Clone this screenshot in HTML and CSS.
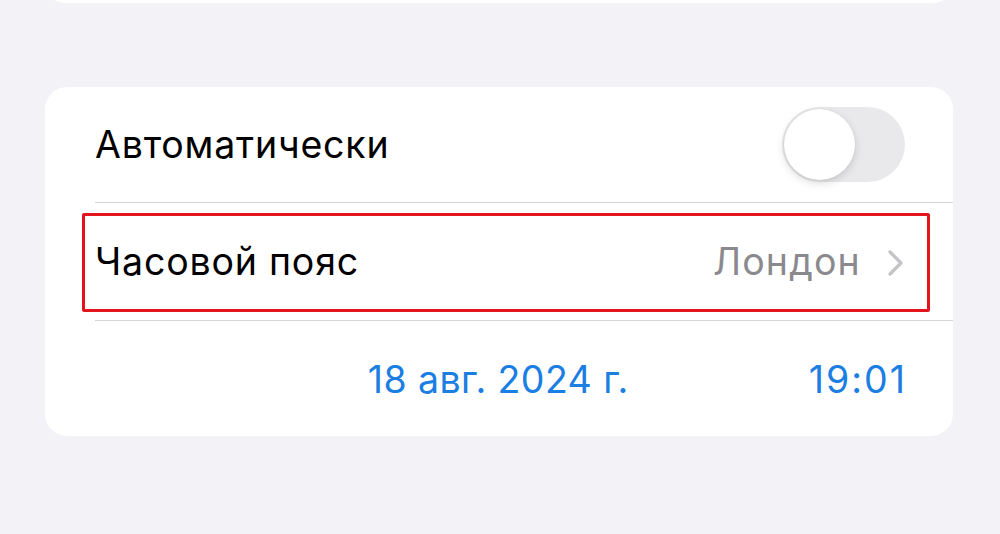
FILE: index.html
```html
<!DOCTYPE html>
<html lang="ru">
<head>
  <meta charset="UTF-8">
  <meta name="viewport" content="width=device-width, initial-scale=1.0">
  <title>Дата и время</title>
  <link rel="stylesheet" href="styles.css">
</head>
<body>
  <div class="group group-prev"></div>

  <div class="group">
    <div class="row">
      <span class="label">Автоматически</span>
      <span class="switch"><span class="knob"></span></span>
    </div>

    <div class="row row-link">
      <span class="label">Часовой пояс</span>
      <span class="value">Лондон</span>
      <svg class="chevron" width="18" height="28" viewBox="0 0 18 28">
        <path d="M3 3 L14 14 L3 25" fill="none" stroke="#c4c4c7" stroke-width="3.2" stroke-linecap="round" stroke-linejoin="round"/>
      </svg>
      <span class="highlight"></span>
    </div>

    <div class="row row-date">
      <span class="picker">18 авг. 2024 г.</span>
      <span class="picker picker-time">19:01</span>
    </div>
  </div>
</body>
</html>
```

FILE: styles.css
```css
body {
  margin: 0;
  background-color: #f2f2f7;
  font-family: Inter, Roboto, sans-serif;
  height: 534px;
  overflow: hidden;
}

.group {
  margin: 0 47px 0 45px;
  background-color: #fff;
  border-radius: 22px;
  padding-left: 50px;
}

/* bottom edge of the previous section */
.group-prev {
  height: 40px;
  margin-top: -37px;
  margin-bottom: 84px;
}

.row {
  position: relative;
  display: flex;
  align-items: center;
  height: 115px;
  padding-right: 48px;
  border-bottom: 1px solid #d4d4d8;
}

.row-link {
  height: 117px;
}

.row-date {
  border-bottom: none;
  justify-content: flex-end;
  gap: 180px;
  height: 114px;
  padding-top: 1px;
}

.label {
  flex: 1;
  font-size: 37.5px;
  letter-spacing: 0.8px;
  color: #000;
}

.value {
  font-size: 37.5px;
  letter-spacing: 1.2px;
  color: #8a8a8e;
  margin-right: 26px;
}

.chevron {
  display: block;
  margin-top: 2px;
}

.picker {
  font-size: 37.5px;
  letter-spacing: 0.4px;
  color: #1a7ee3;
}

.picker-time {
  letter-spacing: 2px;
  margin-right: -2px;
}

.switch {
  position: relative;
  width: 123px;
  height: 75px;
  border-radius: 38px;
  background-color: #e9e9eb;
}

.switch .knob {
  position: absolute;
  left: 2px;
  top: 2px;
  width: 71px;
  height: 71px;
  border-radius: 50%;
  background-color: #fff;
  box-shadow: 0 3px 8px rgba(0, 0, 0, 0.15), 0 0 1px rgba(0, 0, 0, 0.1);
}

/* red annotation frame around the time zone row */
.highlight {
  position: absolute;
  left: -13px;
  right: 23px;
  top: 10px;
  bottom: 8px;
  border: 3px solid #e3141c;
  border-radius: 2px;
}
```
